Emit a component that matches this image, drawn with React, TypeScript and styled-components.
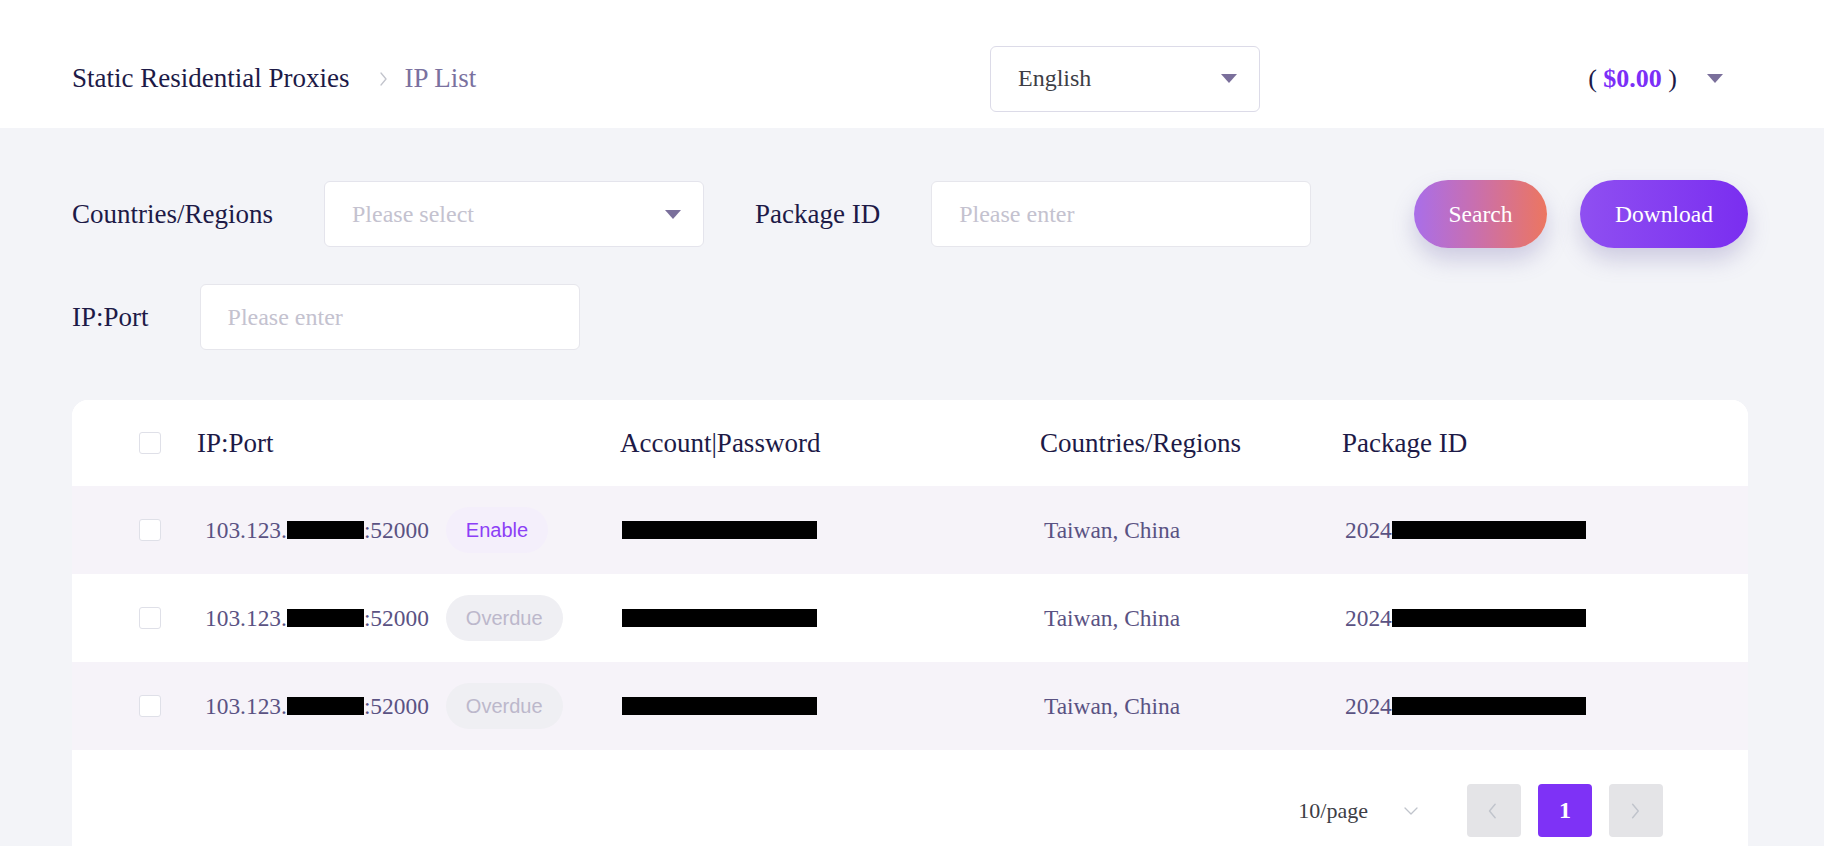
import React from "react";
import styled, { createGlobalStyle } from "styled-components";

const Global = createGlobalStyle`
  html, body { margin: 0; padding: 0; background: #ffffff; }
  body { font-family: "Liberation Serif", "Times New Roman", serif; color: #1d1a47; overflow: hidden; }
  * { box-sizing: border-box; }
`;

const Page = styled.div`
  width: 1830px;
  height: 852px;
  display: flex;
  flex-direction: column;
  background: #ffffff;
`;

const TopBar = styled.header`
  height: 128px;
  flex: 0 0 128px;
  display: grid;
  grid-template-columns: 918px 270px 1fr;
  align-items: center;
  padding: 29px 107px 0 72px;
  background: #ffffff;
`;

const Crumbs = styled.nav`
  display: flex;
  align-items: center;
  font-size: 27px;
  line-height: 1;
`;

const CrumbLink = styled.span`
  color: #1d1a47;
`;

const CrumbCurrent = styled.span`
  color: #7a719f;
`;

const CrumbSep = styled.span`
  display: flex;
  margin: 0 12px 0 27px;
  color: #c0c4cc;
`;

const SelectBox = styled.div<{ $w: number; $h: number; $border: string }>`
  width: ${(p) => p.$w}px;
  height: ${(p) => p.$h}px;
  display: flex;
  align-items: center;
  justify-content: space-between;
  padding: 0 22px 0 27px;
  background: #ffffff;
  border: 1.5px solid ${(p) => p.$border};
  border-radius: 6px;
  font-size: 24px;
`;

const SelectText = styled.span<{ $placeholder?: boolean }>`
  color: ${(p) => (p.$placeholder ? "#c4c2cf" : "#3d3d45")};
`;

const Caret = styled.span`
  width: 0;
  height: 0;
  border-left: 8px solid transparent;
  border-right: 8px solid transparent;
  border-top: 9px solid #7a6f9b;
`;

const Balance = styled.div`
  justify-self: end;
  display: flex;
  align-items: center;
  gap: 30px;
  font-size: 26px;
`;

const BalanceText = styled.span`
  color: #1d1a47;
  white-space: pre;
`;

const Amount = styled.b`
  color: #7b2ff7;
  font-weight: 700;
`;

const Main = styled.main`
  flex: 0 0 718px;
  height: 718px;
  margin-right: 6px;
  overflow: hidden;
  background: #f3f4f8;
  padding: 52px 76px 0 72px;
  display: flex;
  flex-direction: column;
`;

const FilterRow = styled.div<{ $mt?: number }>`
  display: flex;
  align-items: center;
  gap: 51px;
  margin-top: ${(p) => p.$mt ?? 0}px;
`;

const Label = styled.span`
  font-size: 27px;
  color: #1d1a47;
  white-space: nowrap;
`;

const Input = styled.div`
  width: 380px;
  height: 66px;
  display: flex;
  align-items: center;
  padding: 0 27px;
  background: #ffffff;
  border: 1.5px solid #e6e6ec;
  border-radius: 6px;
  font-size: 24px;
  color: #c4c2cf;
`;

const Actions = styled.div`
  margin-left: auto;
  display: flex;
  gap: 33px;
`;

const PillButton = styled.button<{ $variant: "search" | "download" }>`
  height: 68px;
  width: ${(p) => (p.$variant === "search" ? 133 : 168)}px;
  border: none;
  border-radius: 34px;
  color: #ffffff;
  font-family: "Liberation Serif", "Times New Roman", serif;
  font-size: 23.5px;
  background: ${(p) =>
    p.$variant === "search"
      ? "linear-gradient(90deg, #a96ee9 0%, #c86fb0 45%, #ec7660 100%)"
      : "linear-gradient(90deg, #8f4ff1 0%, #7a2ef0 100%)"};
  box-shadow: 0 12px 22px rgba(110, 100, 170, 0.28);
  cursor: pointer;
`;

const Card = styled.section`
  margin-top: 50px;
  background: #ffffff;
  border-radius: 16px 16px 0 0;
  overflow: hidden;
  flex: 1;
`;

const GridRow = styled.div<{ $h: number; $stripe?: boolean }>`
  display: grid;
  grid-template-columns: 58px 423px 420px 302px 1fr;
  align-items: center;
  height: ${(p) => p.$h}px;
  padding-left: 67px;
  background: ${(p) => (p.$stripe ? "#f6f3f9" : "#ffffff")};
`;

const HeadCell = styled.div`
  font-size: 27px;
  color: #1d1a47;
  white-space: nowrap;
`;

const Cell = styled.div<{ $inset?: number }>`
  display: flex;
  align-items: center;
  padding-left: ${(p) => p.$inset ?? 3}px;
  font-size: 23.4px;
  color: #5a5283;
  white-space: nowrap;
`;

const Check = styled.span`
  display: block;
  width: 22px;
  height: 22px;
  border: 1.5px solid #dfe0e8;
  border-radius: 3px;
  background: #ffffff;
`;

const Redacted = styled.span<{ $w: number }>`
  display: inline-block;
  width: ${(p) => p.$w}px;
  height: 18px;
  background: #000000;
`;

const Status = styled.span<{ $active?: boolean }>`
  margin-left: 17px;
  height: 46px;
  padding: 0 20px;
  display: inline-flex;
  align-items: center;
  border-radius: 23px;
  font-family: "Liberation Sans", Arial, sans-serif;
  font-size: 20px;
  color: ${(p) => (p.$active ? "#8c3ff6" : "#bcb8cb")};
  background: ${(p) => (p.$active ? "#f4effb" : "#efeff3")};
`;

const Pager = styled.div`
  display: flex;
  justify-content: flex-end;
  align-items: center;
  padding: 34px 85px 0 0;
`;

const Sizes = styled.div`
  display: flex;
  align-items: center;
  gap: 35px;
  margin-right: 48px;
  font-size: 22px;
  color: #3d3d45;
`;

const PageBtns = styled.div`
  display: flex;
  gap: 17px;
`;

const PageBtn = styled.button<{ $active?: boolean }>`
  width: 54px;
  height: 53px;
  border: none;
  border-radius: 4px;
  display: flex;
  align-items: center;
  justify-content: center;
  padding: 0;
  font-family: "Liberation Serif", "Times New Roman", serif;
  font-size: 24px;
  font-weight: 700;
  color: #ffffff;
  background: ${(p) => (p.$active ? "#7e32f6" : "#e4e4e7")};
`;

const Chevron = ({ dir, size = 14, color = "#c0c4cc" }: { dir: "left" | "right" | "down"; size?: number; color?: string }) => {
  const pts =
    dir === "left" ? "9,2 4,8 9,14" : dir === "right" ? "5,2 10,8 5,14" : "2,5 8,11 14,5";
  return (
    <svg width={size} height={size} viewBox="0 0 16 16" fill="none">
      <polyline points={pts} stroke={color} strokeWidth="1.3" strokeLinecap="round" strokeLinejoin="round" />
    </svg>
  );
};

const rows = [
  { status: "Enable", active: true },
  { status: "Overdue", active: false },
  { status: "Overdue", active: false },
];

export default function App() {
  return (
    <Page>
      <Global />
      <TopBar>
        <Crumbs>
          <CrumbLink>Static Residential Proxies</CrumbLink>
          <CrumbSep>
            <Chevron dir="right" size={16} color="#c2c4cc" />
          </CrumbSep>
          <CrumbCurrent>IP List</CrumbCurrent>
        </Crumbs>
        <SelectBox $w={270} $h={66} $border="#dcdbe8">
          <SelectText>English</SelectText>
          <Caret />
        </SelectBox>
        <Balance>
          <BalanceText>
            {"( "}
            <Amount>$0.00</Amount>
            {" )"}
          </BalanceText>
          <Caret />
        </Balance>
      </TopBar>
      <Main>
        <FilterRow>
          <Label>Countries/Regions</Label>
          <SelectBox $w={380} $h={66} $border="#e4e4ec">
            <SelectText $placeholder>Please select</SelectText>
            <Caret />
          </SelectBox>
          <Label>Package ID</Label>
          <Input>Please enter</Input>
          <Actions>
            <PillButton $variant="search">Search</PillButton>
            <PillButton $variant="download">Download</PillButton>
          </Actions>
        </FilterRow>
        <FilterRow $mt={36}>
          <Label>IP:Port</Label>
          <Input>Please enter</Input>
        </FilterRow>
        <Card>
          <GridRow $h={86}>
            <Check />
            <HeadCell>IP:Port</HeadCell>
            <HeadCell>Account|Password</HeadCell>
            <HeadCell>Countries/Regions</HeadCell>
            <HeadCell>Package ID</HeadCell>
          </GridRow>
          {rows.map((r, i) => (
            <GridRow key={i} $h={88} $stripe={i % 2 === 0}>
              <Check />
              <Cell $inset={8}>
                103.123.
                <Redacted $w={77} />
                :52000
                <Status $active={r.active}>{r.status}</Status>
              </Cell>
              <Cell $inset={2}>
                <Redacted $w={195} />
              </Cell>
              <Cell $inset={4}>Taiwan, China</Cell>
              <Cell $inset={3}>
                2024
                <Redacted $w={194} />
              </Cell>
            </GridRow>
          ))}
          <Pager>
            <Sizes>
              10/page
              <Chevron dir="down" size={16} />
            </Sizes>
            <PageBtns>
              <PageBtn>
                <Chevron dir="left" size={18} />
              </PageBtn>
              <PageBtn $active>1</PageBtn>
              <PageBtn>
                <Chevron dir="right" size={18} />
              </PageBtn>
            </PageBtns>
          </Pager>
        </Card>
      </Main>
    </Page>
  );
}
